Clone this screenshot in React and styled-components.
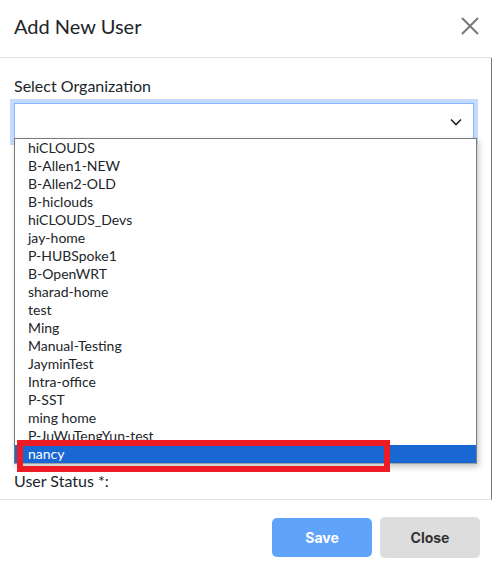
import React from "react";
import styled, { createGlobalStyle } from "styled-components";

const orgs = [
  "hiCLOUDS",
  "B-Allen1-NEW",
  "B-Allen2-OLD",
  "B-hiclouds",
  "hiCLOUDS_Devs",
  "jay-home",
  "P-HUBSpoke1",
  "B-OpenWRT",
  "sharad-home",
  "test",
  "Ming",
  "Manual-Testing",
  "JayminTest",
  "Intra-office",
  "P-SST",
  "ming home",
  "P-JuWuTengYun-test",
  "nancy",
];

const GlobalStyle = createGlobalStyle`
  html, body {
    margin: 0;
    padding: 0;
    background: #fff;
  }
  body {
    font-family: Lato, "Liberation Sans", sans-serif;
    color: #212529;
  }
`;

const Modal = styled.div`
  width: 492px;
  height: 572px;
  display: flex;
  flex-direction: column;
  background: #fff;
`;

const Header = styled.div`
  height: 58px;
  display: flex;
  align-items: center;
  justify-content: space-between;
  padding: 0 12px 5px 14px;
  border-bottom: 1px solid #dee2e6;
  box-sizing: border-box;
`;

const Title = styled.h4`
  margin: 0;
  font-size: 20px;
  font-weight: 400;
  color: #212529;
  line-height: 24px;
`;

const CloseX = styled.button`
  width: 20px;
  height: 20px;
  padding: 0;
  border: none;
  background: none;
  display: flex;
  align-items: center;
  justify-content: center;
  cursor: pointer;
`;

const Body = styled.div`
  height: 441px;
  display: flex;
  flex-direction: column;
  padding: 0 17px 0 14px;
  border-right: 1px solid #7a7a7a;
  border-bottom: 1px solid #dee2e6;
  position: relative;
`;

const Label = styled.label`
  font-size: 16px;
  line-height: 20px;
  color: #212529;
  margin-top: ${(p) => p.$top || 0}px;
`;

const SelectWrap = styled.div`
  position: relative;
  margin-top: 7px;
  width: 460px;
`;

const SelectBox = styled.div`
  height: 38px;
  box-sizing: border-box;
  border: 1px solid #86b7fe;
  box-shadow: 0 0 0 4px #c2dbfe;
  background: #fff;
  display: flex;
  align-items: center;
  justify-content: flex-end;
  padding-right: 11px;
`;

const List = styled.ul`
  position: absolute;
  top: 35px;
  left: 0;
  width: 461px;
  margin: 0;
  padding: 0;
  list-style: none;
  background: #fff;
  border: 1px solid #7a7a7a;
  border-bottom-color: #a0a0a0;
  box-shadow: 2px 3px 6px rgba(0, 0, 0, 0.22);
  z-index: 2;
`;

const Item = styled.li`
  height: 18px;
  line-height: 18px;
  padding-left: 13px;
  font-size: 14px;
  color: ${(p) => (p.$active ? "#fff" : "#212529")};
  background: ${(p) => (p.$active ? "#1967d2" : "transparent")};
`;

const Highlight = styled.div`
  position: absolute;
  left: 2px;
  bottom: -9px;
  width: 361px;
  height: 20px;
  border: 6.5px solid #ed1c24;
  pointer-events: none;
`;

const Footer = styled.div`
  flex: 1;
  display: flex;
  justify-content: flex-end;
  align-items: flex-start;
  gap: 8px;
  padding: 17px 12px 0 0;
`;

const Button = styled.button`
  width: 100px;
  border: none;
  border-radius: 5px;
  font-family: Inter, "Open Sans", sans-serif;
  font-weight: 700;
  font-size: 14px;
  color: ${(p) => (p.$primary ? "#fff" : "#333")};
  background: ${(p) => (p.$primary ? "#60a3fb" : "#dddddd")};
  margin-top: ${(p) => (p.$primary ? 1 : 0)}px;
  height: ${(p) => (p.$primary ? 39 : 41)}px;
  cursor: pointer;
`;

const App = () => {
  return (
    <>
      <GlobalStyle />
      <Modal>
        <Header>
          <Title>Add New User</Title>
          <CloseX aria-label="close">
            <svg width="18" height="18" viewBox="0 0 18 18">
              <path
                d="M1 1 L17 17 M17 1 L1 17"
                stroke="#777"
                strokeWidth="2"
                fill="none"
              />
            </svg>
          </CloseX>
        </Header>
        <Body>
          <Label $top={18}>Select Organization</Label>
          <SelectWrap>
            <SelectBox>
              <svg width="12" height="8" viewBox="0 0 12 8">
                <path
                  d="M1 1.5 L6 6.5 L11 1.5"
                  stroke="#222"
                  strokeWidth="1.6"
                  fill="none"
                />
              </svg>
            </SelectBox>
            <List>
              {orgs.map((o) => (
                <Item key={o} $active={o === "nancy"}>
                  {o}
                </Item>
              ))}
              <Highlight />
            </List>
          </SelectWrap>
          <Label $top={330}>User Status *:</Label>
        </Body>
        <Footer>
          <Button $primary>Save</Button>
          <Button>Close</Button>
        </Footer>
      </Modal>
    </>
  );
};

export default App;
